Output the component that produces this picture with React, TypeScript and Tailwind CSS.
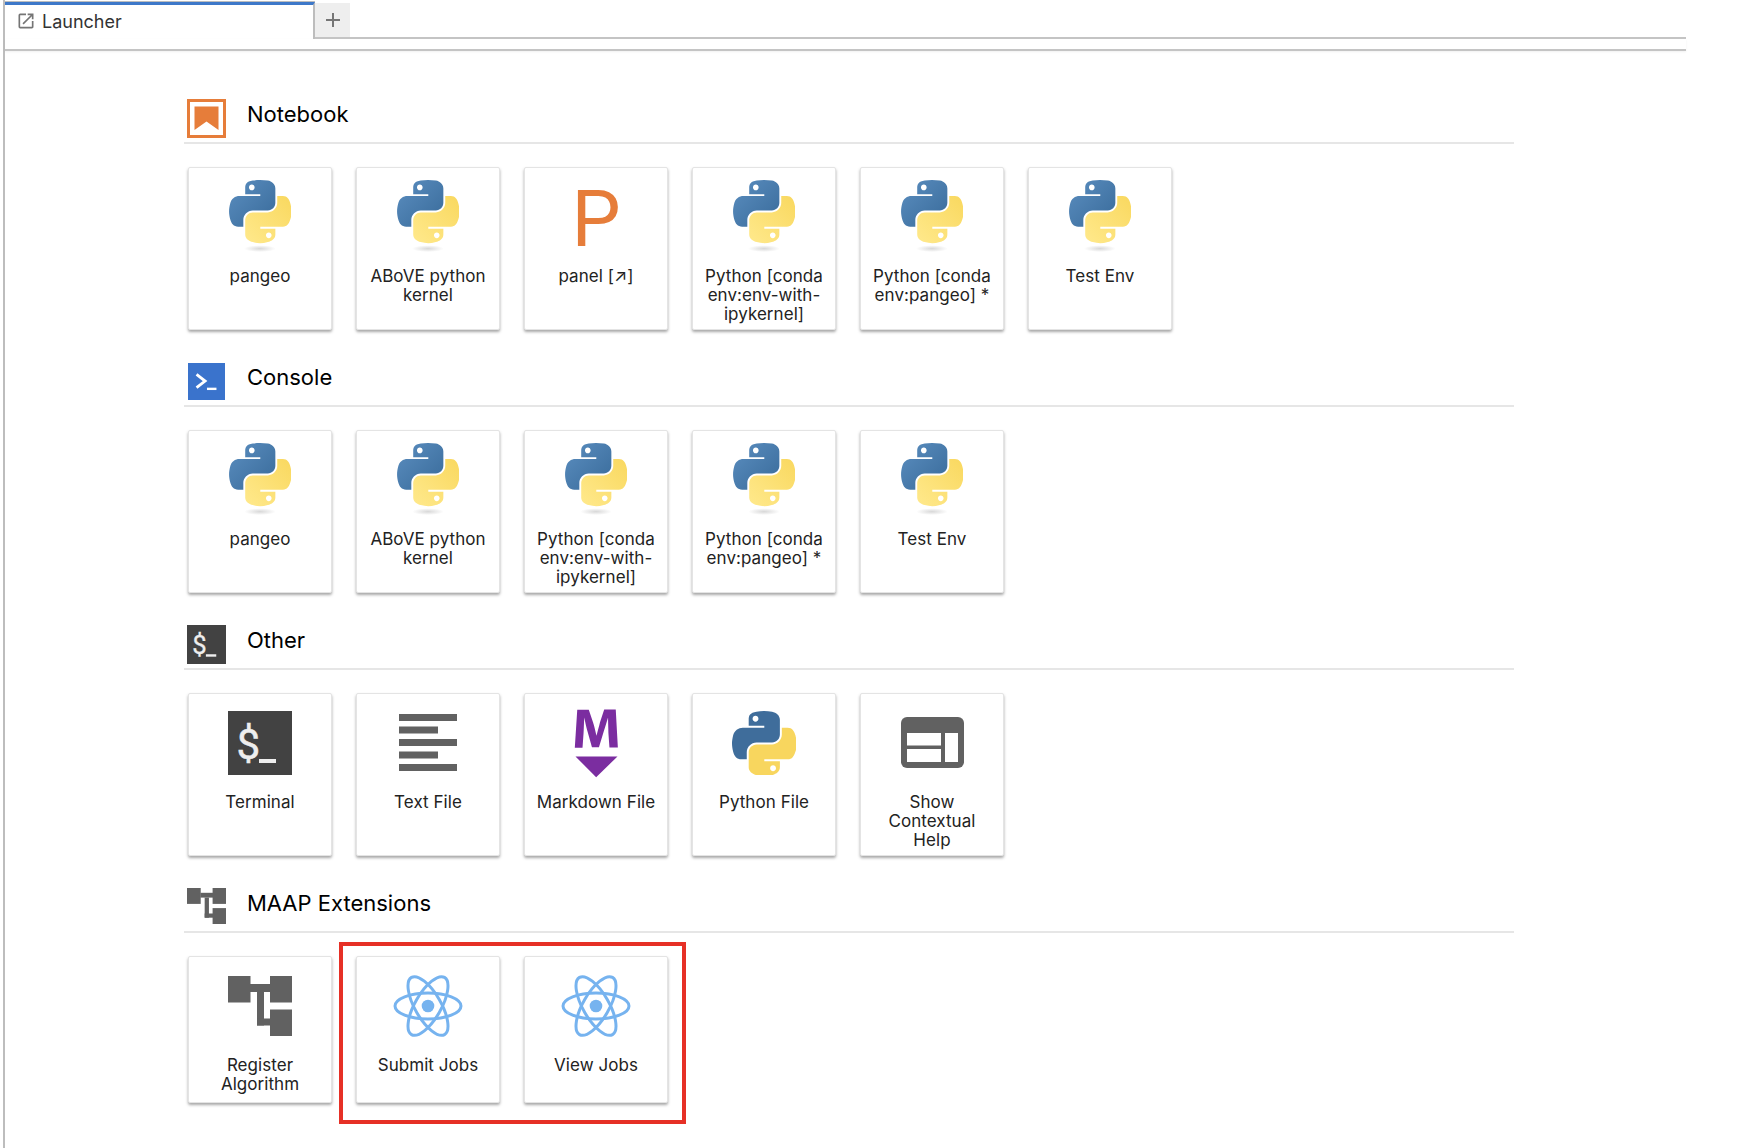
import React from "react";

const FONT = "font-['Inter','Liberation_Sans',sans-serif]";

function PythonIcon({ id, flat = false }: { id: string; flat?: boolean }) {
  const blue =
    "M54.918785.00091927C50.335132.02221727 45.957846.41313697 42.106285 1.0946693 30.760069 3.0991731 28.700036 7.2947714 28.700035 15.032169v10.21875h26.8125v3.40625h-26.8125-10.0625c-7.792459 0-14.6157588 4.683717-16.7499998 13.59375-2.46181998 10.212966-2.57101508 16.586023 0 27.25 1.9059283 7.937852 6.4575432 13.593748 14.2499998 13.59375h9.21875v-12.25c0-8.849902 7.657144-16.656248 16.75-16.65625h26.78125c7.454951 0 13.406253-6.138164 13.40625-13.625v-25.53125c0-7.2663386-6.12998-12.7247771-13.40625-13.9374997C64.281548.32794397 59.502438-.02037903 54.918785.00091927Zm-14.5 8.21875013c2.769547 0 5.03125 2.2986456 5.03125 5.1249996-.000002 2.816336-2.261703 5.09375-5.03125 5.09375-2.779476-.000001-5.03125-2.277415-5.03125-5.09375-.000001-2.826353 2.251774-5.1249996 5.03125-5.1249996Z";
  const yellow =
    "M85.637535 28.657169v11.90625c0 9.230755-7.825895 16.999999-16.75 17h-26.78125c-7.335833 0-13.406249 6.278483-13.40625 13.625v25.531247c0 7.266344 6.318588 11.540324 13.40625 13.625004 8.487331 2.49561 16.626237 2.94663 26.78125 0 6.750155-1.95439 13.406253-5.88761 13.40625-13.625004V86.500919h-26.78125v-3.40625h26.78125 13.406254c7.792461 0 10.696251-5.435408 13.406241-13.59375 2.79933-8.398886 2.74022-16.475776 0-27.25-1.92578-7.757441-5.60387-13.59375-13.406241-13.59375ZM70.575035 93.313419c2.779478.000003 5.03125 2.277417 5.03125 5.093747-.000002 2.826354-2.251775 5.125004-5.03125 5.125004-2.769548 0-5.03125-2.29865-5.03125-5.125004.000002-2.81633 2.261705-5.093747 5.03125-5.093747Z";
  if (flat) {
    return (
      <svg width="64" height="64" viewBox="0 0 110 110" className="mt-[1px] block">
        <path fill="#3f6d9b" d={blue} />
        <path fill="#f8d65e" d={yellow} />
      </svg>
    );
  }
  return (
    <svg width="62" height="72" viewBox="0 0 110 128" className="block self-start">
      <defs>
        <linearGradient id={`${id}b`} x1="0" y1="0" x2="1" y2="1">
          <stop offset="0" stopColor="#5b8ec0" />
          <stop offset="1" stopColor="#386a99" />
        </linearGradient>
        <linearGradient id={`${id}y`} x1="1" y1="0" x2="0" y2="1">
          <stop offset="0" stopColor="#f9d85f" />
          <stop offset="1" stopColor="#ffe98c" />
        </linearGradient>
        <radialGradient id={`${id}s`}>
          <stop offset="0" stopColor="#b8b8b8" stopOpacity="0.55" />
          <stop offset="1" stopColor="#b8b8b8" stopOpacity="0" />
        </radialGradient>
      </defs>
      <path fill={`url(#${id}b)`} d={blue} />
      <path fill={`url(#${id}y)`} d={yellow} />
      <ellipse cx="55" cy="122" rx="28" ry="6" fill={`url(#${id}s)`} />
    </svg>
  );
}

function PanelIcon() {
  return (
    <span className="flex h-[72px] w-[62px] items-center justify-center pt-[8px] text-[78px] leading-none font-normal text-[#e67d3a] font-['Roboto',sans-serif]">
      P
    </span>
  );
}

function TerminalIcon({ size = 64, inCard = true }: { size?: number; inCard?: boolean }) {
  return (
    <svg width={size} height={size} viewBox="0 0 64 64" className={inCard ? "mt-[1px] block" : "block"}>
      <rect width="64" height="64" fill="#424242" />
      <text
        x="8.5"
        y="47.5"
        fontSize="42"
        fill="#eeeeee"
        stroke="#eeeeee"
        strokeWidth="0.5"
        fontFamily="Roboto, sans-serif"
      >
        $
      </text>
      <rect x="31" y="48" width="17" height="4" fill="#eeeeee" />
    </svg>
  );
}

function TextIcon() {
  return (
    <svg width="58" height="57" viewBox="0 0 58 57" className="mt-[1px] block">
      <g fill="#616161">
        <rect x="0" y="0" width="58" height="7" />
        <rect x="0" y="12.5" width="39" height="7" />
        <rect x="0" y="25" width="58" height="7" />
        <rect x="0" y="37.5" width="39" height="7" />
        <rect x="0" y="50" width="58" height="7" />
      </g>
    </svg>
  );
}

function MarkdownIcon() {
  return (
    <svg width="77" height="76" viewBox="0 0 22 22" preserveAspectRatio="none" className="mt-[2px] block">
      <path
        fill="#7b2da0"
        d="M5 14.9h12l-6.1 6zm9.4-6.8c0-1.3-.1-2.9-.1-4.5-.4 1.4-.9 2.9-1.3 4.3l-1.3 4.3h-2L8.5 7.9c-.4-1.3-.7-2.9-1-4.3-.1 1.6-.1 3.2-.2 4.6L7 12.4H4.8l.7-11h3.3L10 5c.4 1.2.7 2.7 1 3.9.3-1.2.7-2.6 1-3.9l1.2-3.7h3.3l.6 11h-2.4l-.3-4.2z"
      />
    </svg>
  );
}

function InspectorIcon() {
  return (
    <svg width="63" height="51" viewBox="0 0 63 51" className="mt-[1px] block">
      <rect width="63" height="51" rx="6" fill="#616161" />
      <rect x="6" y="16" width="34" height="12.5" fill="#ffffff" />
      <rect x="6" y="32" width="34" height="13" fill="#ffffff" />
      <rect x="44" y="16" width="13" height="29" fill="#ffffff" />
    </svg>
  );
}

function AlgorithmIcon({ w = 64, h = 60, inCard = true }: { w?: number; h?: number; inCard?: boolean }) {
  return (
    <svg
      width={w}
      height={h}
      viewBox="0 0 64 60"
      preserveAspectRatio="none"
      className={inCard ? "mt-[2px] block" : "block"}
    >
      <g fill="#616161">
        <rect x="0" y="0" width="22.5" height="26.5" />
        <rect x="42" y="0" width="22" height="26.5" />
        <rect x="42" y="33.5" width="22" height="26.5" />
        <rect x="22" y="8" width="21" height="8" />
        <rect x="29" y="16" width="7" height="33.5" />
        <rect x="29" y="42.5" width="14" height="7" />
      </g>
    </svg>
  );
}

function ReactIcon() {
  return (
    <svg width="70" height="64" viewBox="0 0 70 64" className="mt-[1px] block">
      <circle cx="35" cy="32" r="6.3" fill="#76b3ef" />
      <g fill="none" stroke="#76b3ef" strokeWidth="3">
        <ellipse cx="35" cy="32" rx="33" ry="13" />
        <ellipse cx="35" cy="32" rx="33" ry="13" transform="rotate(60 35 32)" />
        <ellipse cx="35" cy="32" rx="33" ry="13" transform="rotate(120 35 32)" />
      </g>
    </svg>
  );
}

function Card({ label, icon }: { label: string; icon: React.ReactNode }) {
  return (
    <div className="flex min-h-[147px] w-[144px] flex-col items-center rounded-[2px] border border-[#e4e4e4] bg-white pb-[5px] shadow-[0_2px_3px_rgba(0,0,0,0.35)]">
      <div className="mt-[12px] flex h-[72px] items-center justify-center">{icon}</div>
      <div className="mt-[15px] w-[126px] text-center text-[17px] leading-[19px] tracking-[0.05px] text-[#222222]">
        {label}
      </div>
    </div>
  );
}

function Section({
  title,
  icon,
  children,
}: {
  title: string;
  icon: React.ReactNode;
  children: React.ReactNode;
}) {
  return (
    <section className="w-[1330px]">
      <div className="flex h-[47px] border-b-2 border-[#e6e6e6] pl-[3px]">
        <div className="mt-[2px] h-[39px] w-[39px]">{icon}</div>
        <div className="ml-[21px] mt-[3px] text-[22px] leading-[28px] text-black">{title}</div>
      </div>
      <div className="ml-[4px] mt-[23px] flex gap-[24px]">{children}</div>
    </section>
  );
}

export default function App() {
  return (
    <div className={`h-[1148px] w-[1738px] overflow-hidden bg-white ${FONT}`}>
      <div className="ml-[3px] h-full w-[1683px] border-l-2 border-[#bdbdbd]">
        {/* tab bar */}
        <div className="flex h-[39px] pt-[2px]">
          <div className="flex w-[310px] items-start border-t-[3px] border-r-2 border-t-[#3d78c9] border-r-[#bdbdbd] pl-[11px] pt-[5px] shadow-[0_-1px_0_#bdbdbd]">
            <svg width="20" height="20" viewBox="0 0 24 24" className="mt-[1px] block">
              <path
                fill="#757575"
                d="M19 19H5V5h7V3H5a2 2 0 00-2 2v14a2 2 0 002 2h14c1.1 0 2-.9 2-2v-7h-2v7zM14 3v2h3.59l-9.83 9.83 1.41 1.41L19 6.41V10h2V3h-7z"
              />
            </svg>
            <span className="ml-[6px] text-[18px] leading-[24px] text-[#333333]">Launcher</span>
          </div>
          <div className="flex grow items-start border-b-2 border-[#c4c4c4]">
            <div className="mt-[1px] flex h-[34px] w-[35px] items-center justify-center bg-[#eeeeee]">
              <svg width="18" height="18" viewBox="0 0 18 18">
                <path d="M9 2v14M2 9h14" stroke="#757575" strokeWidth="2" />
              </svg>
            </div>
          </div>
        </div>
        <div className="h-[12px] border-b-2 border-[#c4c4c4] shadow-[0_1px_2px_rgba(0,0,0,0.06)]" />

        <div className="ml-[179px] flex flex-col gap-[30px] pt-[46px]">
          <Section
            title="Notebook"
            icon={
              <svg width="39" height="39" viewBox="0 0 39 39" className="block">
                <rect x="1.5" y="1.5" width="36" height="36" fill="#fff" stroke="#e67d3a" strokeWidth="3" />
                <path d="M7.5 7.5h24v23.5l-12-8.5-12 8.5z" fill="#e67d3a" />
              </svg>
            }
          >
            <Card label="pangeo" icon={<PythonIcon id="n1" />} />
            <Card label="ABoVE python kernel" icon={<PythonIcon id="n2" />} />
            <Card label="panel [↗]" icon={<PanelIcon />} />
            <Card label="Python [conda env:env-with-ipykernel]" icon={<PythonIcon id="n3" />} />
            <Card label="Python [conda env:pangeo] *" icon={<PythonIcon id="n4" />} />
            <Card label="Test Env" icon={<PythonIcon id="n5" />} />
          </Section>
          <Section
            title="Console"
            icon={
              <svg width="37" height="37" viewBox="0 0 39 39" className="ml-[1px] mt-[1px] block">
                <rect width="39" height="39" fill="#3a73cc" />
                <path d="M9 12l9 7-9 7" fill="none" stroke="#fff" strokeWidth="3" />
                <rect x="20" y="26" width="10" height="2.5" fill="#fff" />
              </svg>
            }
          >
            <Card label="pangeo" icon={<PythonIcon id="c1" />} />
            <Card label="ABoVE python kernel" icon={<PythonIcon id="c2" />} />
            <Card label="Python [conda env:env-with-ipykernel]" icon={<PythonIcon id="c3" />} />
            <Card label="Python [conda env:pangeo] *" icon={<PythonIcon id="c4" />} />
            <Card label="Test Env" icon={<PythonIcon id="c5" />} />
          </Section>
          <Section title="Other" icon={<TerminalIcon size={39} inCard={false} />}>
            <Card label="Terminal" icon={<TerminalIcon />} />
            <Card label="Text File" icon={<TextIcon />} />
            <Card label="Markdown File" icon={<MarkdownIcon />} />
            <Card label="Python File" icon={<PythonIcon id="o1" flat />} />
            <Card label="Show Contextual Help" icon={<InspectorIcon />} />
          </Section>
          <Section title="MAAP Extensions" icon={<AlgorithmIcon w={39} h={36} inCard={false} />}>
            <Card label="Register Algorithm" icon={<AlgorithmIcon />} />
            <div className="relative flex gap-[24px]">
              <Card label="Submit Jobs" icon={<ReactIcon />} />
              <Card label="View Jobs" icon={<ReactIcon />} />
              <div className="pointer-events-none absolute -left-[17px] -right-[18px] -top-[14px] -bottom-[21px] border-[4px] border-[#e63026]" />
            </div>
          </Section>
        </div>
      </div>
    </div>
  );
}
